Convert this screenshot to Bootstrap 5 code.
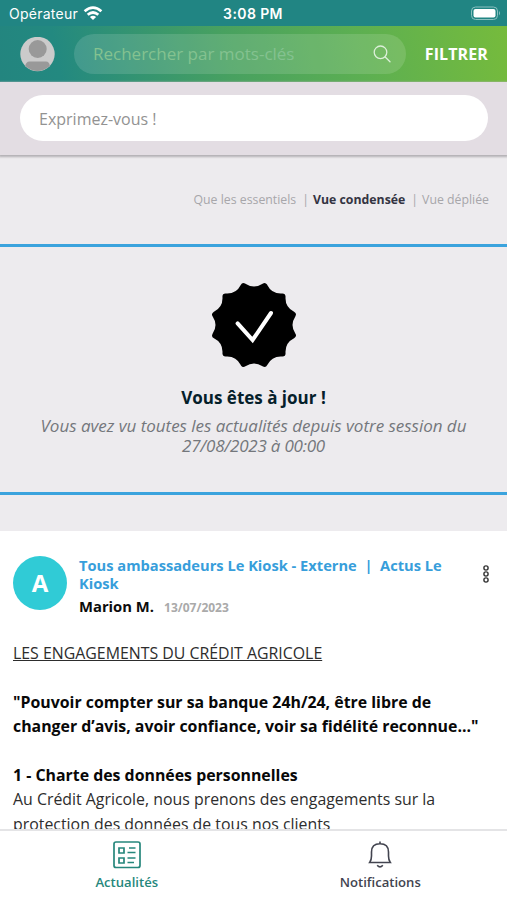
<!DOCTYPE html>
<html lang="fr">
<head>
<meta charset="utf-8">
<meta name="viewport" content="width=device-width, initial-scale=1">
<title>Actualités</title>
<link href="https://cdn.jsdelivr.net/npm/bootstrap@5.3.0/dist/css/bootstrap.min.css" rel="stylesheet">
<style>
body{font-family:"Open Sans","Noto Sans",sans-serif;background:#edebee;color:#222;font-size:16px}
.app{height:900px}
.status{height:26px;background:#218583;font:500 14px/28px Inter,sans-serif;flex:none}
.status-side{width:200px;height:27px}
.status-op{font-weight:400;font-size:14px;letter-spacing:.25px;margin-left:1px}
.clock{margin-left:-1px;letter-spacing:.4px}
.wifi{margin-left:5px}
.battery{margin-right:6px}
.topbar{height:56px;flex:none;padding:0 19px 0 20px;background:linear-gradient(78deg,#23857f 0%,#238980 12%,#48a160 45%,#5caf52 70%,#76bb3c 100%)}
.searchbox{width:332px;height:40px;margin-left:19px;padding:0 15px 0 19px;border-radius:20px;background:rgba(255,255,255,.13);color:#84c290;font-size:17px}
.filter{font-size:16px;letter-spacing:.1px}
.compose{height:73px;flex:none;background:#e3dde3;padding:13px 19px 0 20px;box-shadow:0 1px 2px 1px #b3b0b4}
.compose-input{height:46px;border-radius:23px;padding:1px 0 0 19px;color:#929292;font-size:16px}
.feed{min-height:0;overflow:hidden}
.views{height:89px;padding:36px 18px 0 0;font-size:12.3px;line-height:18px;color:#a7a6aa}
.views strong{color:#343442}
.sep-first{margin-left:6px}
.sep-second{margin-left:6px}
.uptodate{height:251px;border-top:3px solid #3ba3dd;border-bottom:3px solid #3ba3dd;padding-top:34px}
.uptodate h1{font-size:17px;line-height:24px;color:#05202a;margin:17px 0 6px}
.uptodate p{font-size:17px;line-height:20px;color:#74777c;letter-spacing:-.02px}
.session-date{letter-spacing:-.22px}
.post{margin-top:36px;padding:25px 13px 0}
.post-avatar{width:54px;height:54px;background:#30cbd6;font-size:24px;flex:none}
.post-head{width:394px;margin-left:12px}
.channel{font-size:14.66px;line-height:18px;color:#379edb}
.author{font-size:14.8px;line-height:20px;color:#0c0c0c;margin-top:4px}
.date{font-size:12px;color:#aaa;margin-left:10px}
.post-body{font-size:15.89px;line-height:24.4px;color:#2d2d2d;margin-top:23px}
.post-body b{color:#080808}
.tabs{height:71px;flex:none;border-top:2px solid #e4e4e6;font-size:13.1px;line-height:14px;color:#42444f}
.tab-on{color:#26877c}
</style>
<script src="https://cdn.jsdelivr.net/npm/bootstrap@5.3.0/dist/js/bootstrap.bundle.min.js"></script>
</head>
<body>
<div class="app d-flex flex-column overflow-hidden">
  <div class="status d-flex justify-content-between text-white">
    <div class="status-side d-flex align-items-center ps-2">
      <span class="status-op">Opérateur</span>
      <svg class="wifi" width="20" height="15" viewBox="0 0 20 15" fill="none" stroke="#fff" stroke-width="2.7"><path d="M1.6 5.3Q10-2 18.4 5.3M4.7 8.8Q10 4.2 15.3 8.8"/><path d="M10 14 6.9 11Q10 8.6 13.1 11Z" fill="#fff" stroke="none"/></svg>
    </div>
    <span class="clock fw-semibold">3:08 PM</span>
    <div class="status-side d-flex align-items-center justify-content-end">
      <svg class="battery" width="31" height="15" viewBox="0 0 31 15"><rect x="1.5" y="1" width="26" height="12.5" rx="4" fill="none" stroke="#8bc0c0"/><rect x="3.5" y="3" width="22" height="8.5" rx="2" fill="#fff"/><path d="M29 5q2 2 0 4.500z" fill="#8bc0c0"/></svg>
    </div>
  </div>
  <nav class="topbar d-flex align-items-center">
    <svg width="35" height="35" viewBox="0 0 35 35"><circle cx="17.500" cy="17" r="17.200" fill="#cbcbcb"/><circle cx="17.700" cy="12" r="9" fill="#999"/><path d="M5.200 29q.8-4.500 4.300-4.500h16.500q3.500 0 3.800 4.500Q24 34 17.500 34T5.200 29Z" fill="#999"/></svg>
    <div class="searchbox d-flex align-items-center justify-content-between">
      <span>Rechercher par mots-clés</span>
      <svg width="18" height="18" viewBox="0 0 18 18" fill="none" stroke="#dcefd9" stroke-width="1.300" stroke-linecap="round"><circle cx="7.500" cy="7.300" r="6.300"/><path d="m12.200 12 4.800 4.700"/></svg>
    </div>
    <strong class="filter text-white ms-auto">FILTRER</strong>
  </nav>
  <div class="compose position-relative">
    <div class="compose-input bg-white d-flex align-items-center">Exprimez-vous !</div>
  </div>
  <main class="feed flex-fill">
    <div class="views d-flex justify-content-end">
      <span>Que les essentiels</span><span class="sep-first">|</span><strong class="ms-1">Vue condensée</strong><span class="sep-second">|</span><span class="ms-1">Vue dépliée</span>
    </div>
    <section class="uptodate text-center">
      <svg class="d-block mx-auto" width="88" height="88" viewBox="-44 -44 88 88"><path d="M-10.350-38.600Q0-31.800 10.350-38.600Q15.900-27.500 28.300-28.300Q27.500-15.900 38.600-10.350Q31.800 0 38.600 10.350Q27.500 15.900 28.300 28.300Q15.900 27.500 10.350 38.600Q0 31.800-10.350 38.600Q-15.900 27.500-28.300 28.300Q-27.500 15.900-38.600 10.350Q-31.800 0-38.600-10.350Q-27.500-15.900-28.300-28.300Q-15.900-27.500-10.350-38.600Z" stroke="#000" stroke-width="6.500" stroke-linejoin="round"/><path d="M-16.400-1.600-1.400 15 17-12" fill="none" stroke="#fff" stroke-width="4" stroke-linecap="round"/></svg>
      <h1 class="fw-bold">Vous êtes à jour !</h1>
      <p class="fst-italic mb-0">Vous avez vu toutes les actualités depuis votre session du<br><span class="session-date">27/08/2023 à 00:00</span></p>
    </section>
    <article class="post bg-white">
      <div class="d-flex">
        <div class="post-avatar rounded-circle text-white fw-bold d-flex align-items-center justify-content-center">A</div>
        <div class="post-head">
          <div class="channel fw-bold">Tous ambassadeurs Le Kiosk - Externe &nbsp;|&nbsp; Actus Le<br>Kiosk</div>
          <div class="author fw-bold">Marion M.<span class="date">13/07/2023</span></div>
        </div>
        <svg class="mt-2 ms-auto me-1" width="8" height="20" viewBox="0 0 8 20" fill="none" stroke="#333" stroke-width="1.400"><circle cx="4" cy="4" r="2.100"/><circle cx="4" cy="10" r="2.100"/><circle cx="4" cy="16" r="2.100"/></svg>
      </div>
      <div class="post-body text-nowrap">
        <u>LES ENGAGEMENTS DU CRÉDIT AGRICOLE</u><br><br>
        <b>"Pouvoir compter sur sa banque 24h/24, être libre de<br>changer d’avis, avoir confiance, voir sa fidélité reconnue..."</b><br><br>
        <b>1 - Charte des données personnelles</b><br>
        Au Crédit Agricole, nous prenons des engagements sur la<br>protection des données de tous nos clients
      </div>
    </article>
  </main>
  <footer class="tabs bg-white d-flex">
    <div class="tab-on w-50 d-flex flex-column align-items-center fw-semibold">
      <svg class="mt-2 mb-1" width="28" height="32" viewBox="0 0 28 32" fill="none" stroke="currentColor" stroke-width="1.700"><rect x="1" y="3" width="26" height="25.500" rx="2"/><path d="M6 9h5v5H6zM6 19h5v5H6z"/><path d="M16 9h6.500M14.500 13.500h8M14.500 19h8M14.500 23.500H21" stroke-width="1.500"/></svg>
      <span>Actualités</span>
    </div>
    <div class="w-50 d-flex flex-column align-items-center fw-semibold">
      <svg class="mt-2 mb-1" width="28" height="32" viewBox="0 0 28 32" fill="none" stroke="currentColor" stroke-width="1.600"><path d="M14 2.500V5M3.700 23.500H24.300Q22.500 21 22.500 17V13Q22.500 4.800 14 4.800T5.500 13v4q0 4-1.800 6.500ZM11.200 26.200q2.800 3.400 5.600 0"/></svg>
      <span>Notifications</span>
    </div>
  </footer>
</div>
</body>
</html>
